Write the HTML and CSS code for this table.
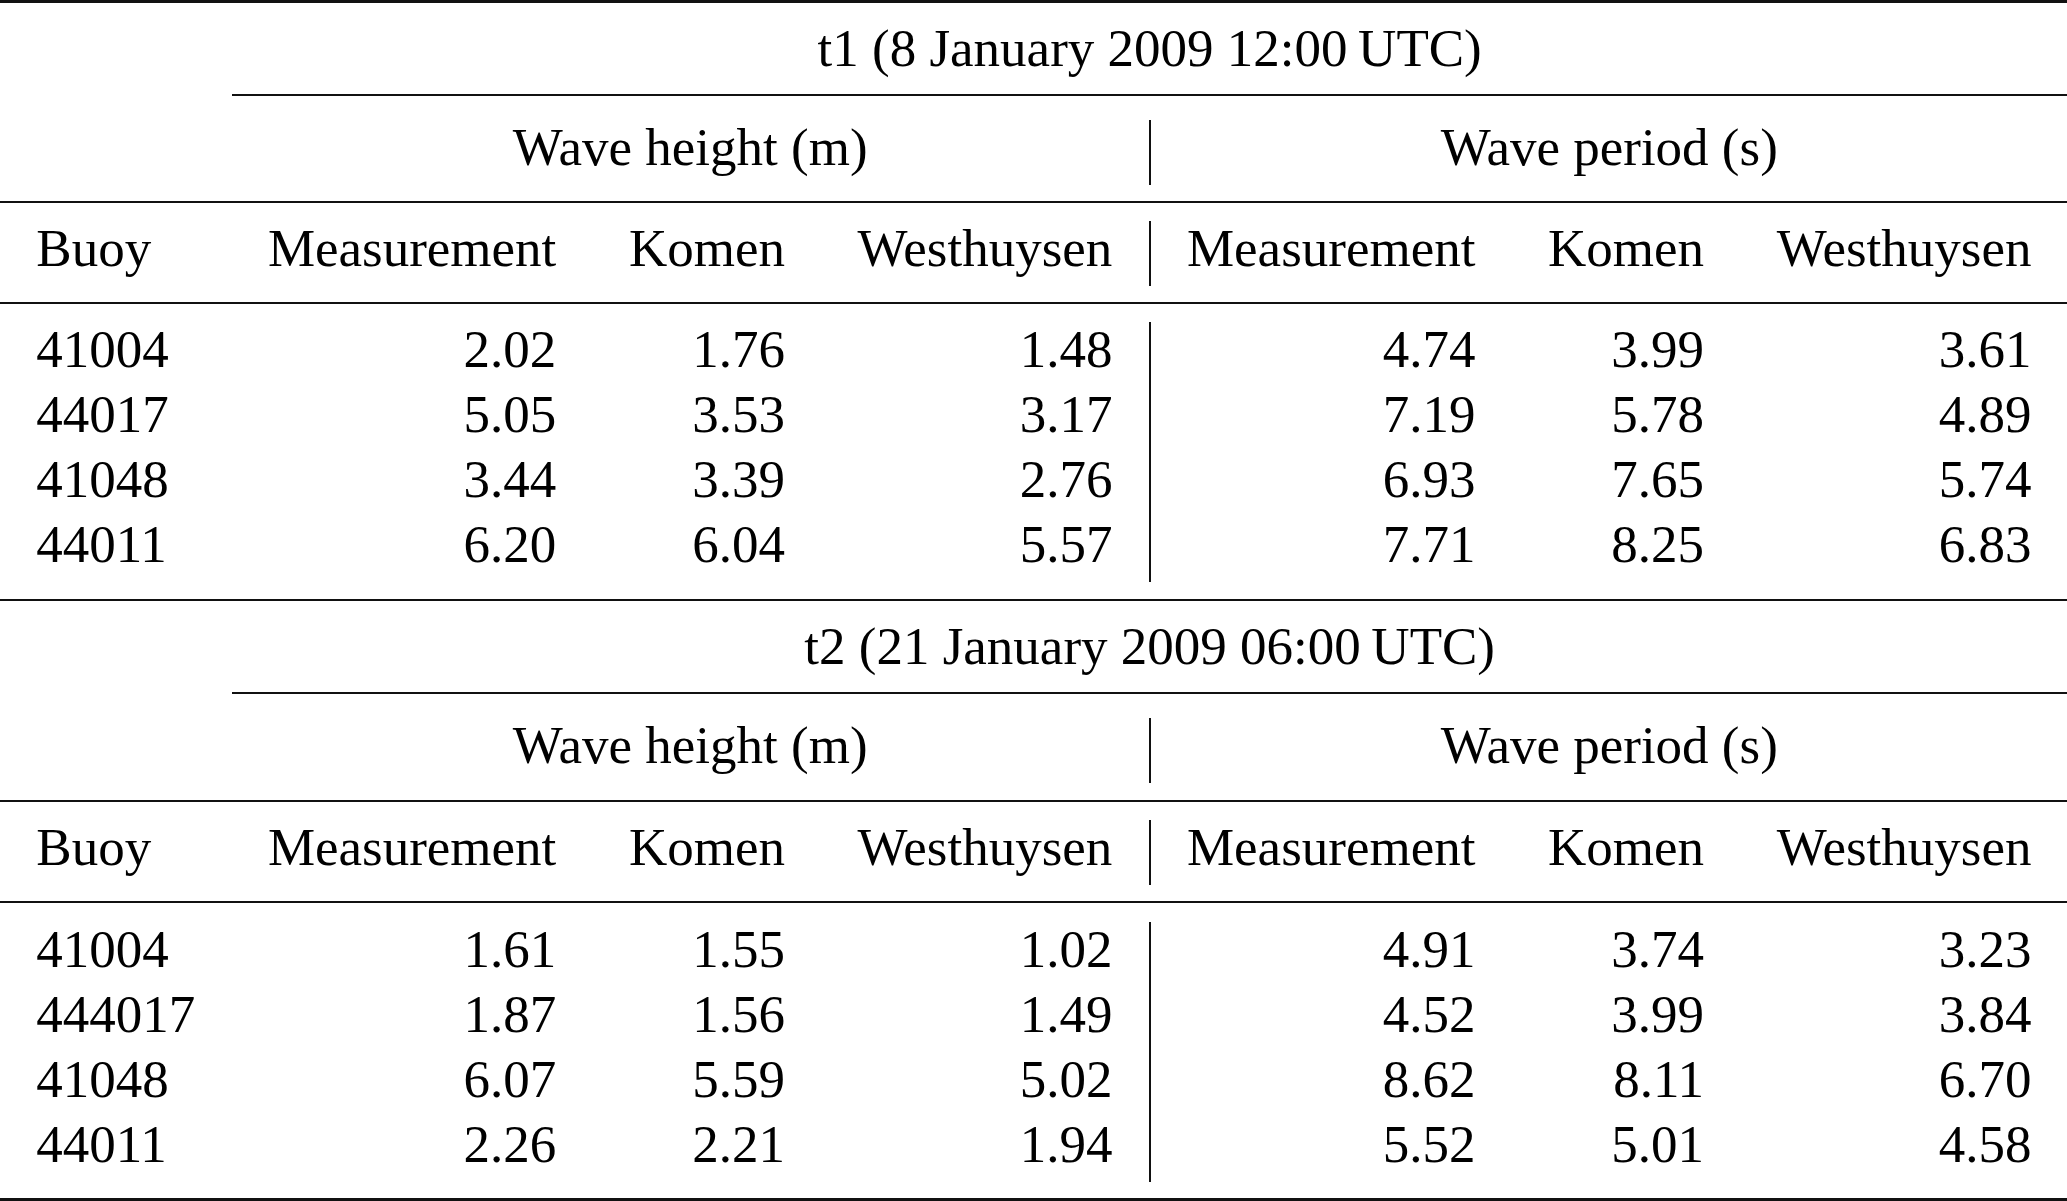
FILE: index.html
```html
<!DOCTYPE html>
<html lang="en">
<head>
<meta charset="utf-8">
<title>Buoy wave comparison</title>
<link rel="stylesheet" href="styles.css">
</head>
<body>
<table class="tbl">
  <tbody>
    <tr class="rule"><td colspan="7"><div class="line heavy g-top"></div></td></tr>
    <tr><td></td><td colspan="6" class="c">t1 (8 January 2009 12:00&thinsp;UTC)</td></tr>
    <tr class="rule"><td></td><td colspan="6"><div class="line g-cmid"></div></td></tr>
    <tr><td></td><td colspan="3" class="c sep">Wave height (m)</td><td colspan="3" class="c">Wave period (s)</td></tr>
    <tr class="rule"><td colspan="7"><div class="line g-16-18"></div></td></tr>
    <tr><td class="l">Buoy</td><td>Measurement</td><td>Komen</td><td class="sep">Westhuysen</td><td>Measurement</td><td>Komen</td><td>Westhuysen</td></tr>
    <tr class="rule"><td colspan="7"><div class="line g-16-18"></div></td></tr>
    <tr><td class="l">41004</td><td>2.02</td><td>1.76</td><td class="sep">1.48</td><td>4.74</td><td>3.99</td><td>3.61</td></tr>
    <tr><td class="l">44017</td><td>5.05</td><td>3.53</td><td class="sep">3.17</td><td>7.19</td><td>5.78</td><td>4.89</td></tr>
    <tr><td class="l">41048</td><td>3.44</td><td>3.39</td><td class="sep">2.76</td><td>6.93</td><td>7.65</td><td>5.74</td></tr>
    <tr><td class="l">44011</td><td>6.20</td><td>6.04</td><td class="sep">5.57</td><td>7.71</td><td>8.25</td><td>6.83</td></tr>
    <tr class="rule"><td colspan="7"><div class="line g-17-18"></div></td></tr>
  </tbody>
  <tbody>
    <tr><td></td><td colspan="6" class="c">t2 (21 January 2009 06:00&thinsp;UTC)</td></tr>
    <tr class="rule"><td></td><td colspan="6"><div class="line g-cmid"></div></td></tr>
    <tr><td></td><td colspan="3" class="c sep">Wave height (m)</td><td colspan="3" class="c">Wave period (s)</td></tr>
    <tr class="rule"><td colspan="7"><div class="line g-17-18"></div></td></tr>
    <tr><td class="l">Buoy</td><td>Measurement</td><td>Komen</td><td class="sep">Westhuysen</td><td>Measurement</td><td>Komen</td><td>Westhuysen</td></tr>
    <tr class="rule"><td colspan="7"><div class="line g-16-19"></div></td></tr>
    <tr><td class="l">41004</td><td>1.61</td><td>1.55</td><td class="sep">1.02</td><td>4.91</td><td>3.74</td><td>3.23</td></tr>
    <tr><td class="l">444017</td><td>1.87</td><td>1.56</td><td class="sep">1.49</td><td>4.52</td><td>3.99</td><td>3.84</td></tr>
    <tr><td class="l">41048</td><td>6.07</td><td>5.59</td><td class="sep">5.02</td><td>8.62</td><td>8.11</td><td>6.70</td></tr>
    <tr><td class="l">44011</td><td>2.26</td><td>2.21</td><td class="sep">1.94</td><td>5.52</td><td>5.01</td><td>4.58</td></tr>
    <tr class="rule"><td colspan="7"><div class="line heavy g-bottom"></div></td></tr>
  </tbody>
</table>
</body>
</html>
```

FILE: styles.css
```css
html, body {
  margin: 0;
  padding: 0;
  background: #ffffff;
  overflow: hidden;
}

.tbl {
  border-collapse: collapse;
  font-family: "Liberation Serif", "Times New Roman", serif;
  font-size: 53px;
  color: #000000;
}

.tbl td {
  padding: 0 36.3px 11px;
  line-height: 54px;
  white-space: nowrap;
  vertical-align: top;
  text-align: right;
}

.tbl td.l {
  text-align: left;
}

.tbl td.c {
  text-align: center;
}

.tbl td.sep {
  border-right: 2px solid #111111;
}

.tbl tr.rule td {
  padding: 0;
  line-height: 0;
  font-size: 0;
}

.line {
  height: 2px;
  background: #111111;
}

.line.heavy {
  height: 3px;
}

.g-top {
  margin: 0 0 18px;
}

.g-cmid {
  margin: 8px 0 24px;
}

.g-16-18 {
  margin: 16px 0 18px;
}

.g-17-18 {
  margin: 17px 0 18px;
}

.g-16-19 {
  margin: 16px 0 19px;
}

.g-bottom {
  margin: 16px 0 0;
}
```
